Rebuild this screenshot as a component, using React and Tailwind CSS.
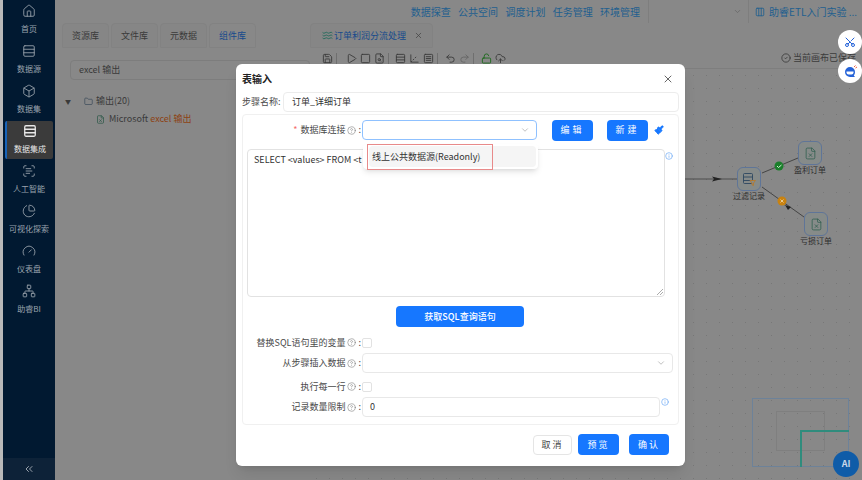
import { Home, Rows3, Box, ScanText, ChartPie, Gauge, Network, ChevronDown, X, CircleHelp, Info, ChevronsLeft, Folder, Save, Play, Square, Undo2, Redo2, LockOpen, CloudUpload, CircleCheck, Scissors, Paintbrush, FileX, Waves, FileSearch, Axis3d, Columns3, SquareMenu } from "lucide-react";

const font = { fontFamily: '"Noto Sans CJK SC", "Noto Sans", sans-serif' };

const navItems = [
  { icon: Home, label: "首页" },
  { icon: Rows3, label: "数据源" },
  { icon: Box, label: "数据集" },
  { icon: Rows3, label: "数据集成", active: true },
  { icon: ScanText, label: "人工智能" },
  { icon: ChartPie, label: "可视化探索" },
  { icon: Gauge, label: "仪表盘" },
  { icon: Network, label: "助睿BI" },
];

function Sidebar() {
  return (
    <aside className="w-[52px] shrink-0 bg-[#011931] flex flex-col text-[#9aa3ad]">
      <div className="flex-1 flex flex-col">
        {navItems.map((item) => {
          const Icon = item.icon;
          return (
            <div
              key={item.label}
              className={
                item.active
                  ? "h-[38px] mt-px mb-px ml-0.5 w-12 pt-[3px] bg-[#3b3b3b] rounded-[2px] border-l-2 border-[#1763b8] flex flex-col items-center text-[#e8e8e8]"
                  : "h-10 pt-[4px] flex flex-col items-center"
              }
            >
              <Icon className="w-[14px] h-[14px]" strokeWidth={item.active ? 2.2 : 1.5} />
              <span className="text-[8px] leading-[11px] mt-[5px] whitespace-nowrap">{item.label}</span>
            </div>
          );
        })}
      </div>
      <div className="h-[22px] bg-[#0d2238] flex items-center justify-center">
        <ChevronsLeft className="w-3 h-3" />
      </div>
    </aside>
  );
}

function LeftPanel() {
  return (
    <div className="w-[255px] shrink-0 pl-[7px] text-[#3a3a3a]">
      <div className="flex gap-[2px] text-[9px]">
        <span className="w-[47px] h-[25px] flex items-center justify-center bg-[#868686] border border-[#828282] rounded-t">资源库</span>
        <span className="w-[47px] h-[25px] flex items-center justify-center bg-[#868686] border border-[#828282] rounded-t">文件库</span>
        <span className="w-[47px] h-[25px] flex items-center justify-center bg-[#868686] border border-[#828282] rounded-t">元数据</span>
        <span className="w-[47px] h-[25px] flex items-center justify-center border border-[#828282] rounded-t text-[#164a8c]">组件库</span>
      </div>
      <div className="mt-[12px] ml-[8px] h-[20px] w-[240px] border border-[#7d7d7d] rounded flex items-center px-2 text-[9px]">excel 输出</div>
      <div className="mt-[15px] flex items-center text-[9px] h-[12px]">
        <span className="text-[6px] w-[22px] pl-[3px]">▼</span>
        <Folder className="w-[9px] h-[9px] text-[#3f4d5c] mr-[3px]" />
        <span>输出(20)</span>
      </div>
      <div className="mt-[6px] ml-[34px] flex items-center text-[9px] h-[12px] whitespace-nowrap">
        <FileX className="w-[9px] h-[9px] text-[#2f5a4a] mr-[4px]" />
        <span>Microsoft <span className="text-[#8d4213]">excel 输出</span></span>
      </div>
    </div>
  );
}

function Node({ className, label, children }) {
  return (
    <div className={`absolute w-[60px] flex flex-col items-center ${className}`}>
      <div className="w-6 h-6 rounded-md border-[1.5px] border-[#5f7598] flex items-center justify-center bg-[#868b89]">{children}</div>
      <span className="text-[8px] leading-[10px] text-[#2e2e2e] whitespace-nowrap">{label}</span>
    </div>
  );
}

function Canvas() {
  return (
    <div className="flex-1 border-t border-[#7e7e7e] bg-[radial-gradient(#777777_0.5px,transparent_0.6px)] bg-[length:13px_13px]" />
  );
}

function ToolDivider() {
  return <span className="w-px h-[11px] bg-[#6f6f6f]" />;
}

function Main() {
  return (
    <div className="flex-1 min-w-0 flex flex-col">
      <header className="h-[23px] shrink-0 flex items-center justify-end text-[10px] text-[#1f5f8f]">
        <div className="flex gap-[7.300px] pr-[8px] h-full items-center whitespace-nowrap">
          <span>数据探查</span>
          <span>公共空间</span>
          <span>调度计划</span>
          <span>任务管理</span>
          <span>环境管理</span>
        </div>
        <div className="w-[214px] border-l border-[#7e7e7e] h-full flex items-center justify-end pr-[5px]">
          <ChevronDown className="w-[9px] h-[9px] text-[#666] mr-[6px]" />
          <span className="whitespace-nowrap flex items-center gap-[4px] border-l border-[#7e7e7e] pl-[6px] h-full">
            <Columns3 className="w-[10px] h-[10px]" />助睿ETL入门实验 ...
          </span>
        </div>
      </header>
      <div className="flex-1 flex min-h-0">
        <LeftPanel />
        <div className="flex-1 min-w-0 flex flex-col">
          <div className="h-[25px] shrink-0 flex">
            <div className="w-[123px] flex items-center bg-[#868686] border border-[#828282] rounded-t pl-[11px] text-[9px] text-[#164a8c]">
              <Waves className="w-[11px] h-[11px] text-[#1f6a5a] mr-px shrink-0" />
              <span className="whitespace-nowrap">订单利润分流处理</span>
              <X className="w-[9px] h-[9px] text-[#444] ml-[8px]" />
            </div>
          </div>
          <div className="h-[20px] shrink-0 flex items-center pl-[12px] gap-[3px] text-[#3b3b3b]">
            <Save className="w-[11px] h-[11px]" />
            <ToolDivider />
            <Play className="w-[11px] h-[11px] ml-[6px]" />
            <Square className="w-[11px] h-[11px]" />
            <FileSearch className="w-[11px] h-[11px]" />
            <ToolDivider />
            <Rows3 className="w-[11px] h-[11px] ml-[3px]" />
            <Axis3d className="w-[11px] h-[11px]" />
            <SquareMenu className="w-[11px] h-[11px]" />
            <ToolDivider />
            <Undo2 className="w-[11px] h-[11px] ml-[4px]" />
            <Redo2 className="w-[11px] h-[11px] text-[#666]" />
            <ToolDivider />
            <LockOpen className="w-[11px] h-[11px] text-[#1e6a1e] ml-[4px]" />
            <CloudUpload className="w-[11px] h-[11px]" />
            <span className="ml-auto text-[9px] flex items-center gap-[2px] whitespace-nowrap pr-[6px]">
              <CircleCheck className="w-[10px] h-[10px] shrink-0" />当前画布已保存
            </span>
          </div>
          <Canvas />
        </div>
      </div>
    </div>
  );
}

function Label({ children, help = true, required }) {
  return (
    <div className="w-[118px] shrink-0 flex items-center justify-end text-[9px] text-[#4a4a4a] whitespace-nowrap gap-[2px]">
      {required && <span className="text-[#f56c6c] mr-px">*</span>}
      <span>{children}</span>
      {help && <CircleHelp className="w-[9px] h-[9px] text-[#777]" strokeWidth={1.5} />}
      <span>:</span>
    </div>
  );
}

function BlueButton({ className, children }) {
  return (
    <button className={`h-[21px] rounded bg-[#1677ff] text-white text-[9px] flex items-center justify-center ${className}`}>
      {children}
    </button>
  );
}

function Dialog() {
  return (
    <div className="absolute left-[236px] top-[64px] w-[449px] h-[402px] bg-white rounded-md px-[6px] shadow-lg flex flex-col">
      <div className="h-[28px] flex items-center justify-between pt-[1px]">
        <span className="text-[10px] font-bold text-[#222]">表输入</span>
        <X className="w-[12px] h-[12px] text-[#666] mr-[5px]" />
      </div>
      <div className="flex items-center h-[20px]">
        <span className="w-[41px] text-[9px] text-[#4a4a4a] whitespace-nowrap">步骤名称:</span>
        <div className="flex-1 h-[20px] border border-[#ececec] rounded flex items-center px-2 text-[9px] text-[#333]">订单_详细订单</div>
      </div>
      <div className="relative mt-[2px] w-[437px] h-[311px] border border-[#f0f0f0] rounded pt-[5px]">
        <div className="flex items-center h-[20px]">
          <Label required>数据库连接</Label>
          <div className="ml-[1px] w-[175px] h-[20px] border border-[#8fc1ff] rounded flex items-center justify-end pr-[6px]">
            <ChevronDown className="w-[10px] h-[10px] text-[#b5b5b5]" />
          </div>
          <BlueButton className="ml-[15px] w-[41px] tracking-[3px]">编辑</BlueButton>
          <BlueButton className="ml-[14px] w-[41px] tracking-[3px]">新建</BlueButton>
          <Paintbrush className="ml-[6px] w-[10px] h-[10px] text-[#1677ff]" fill="currentColor" />
        </div>
        <div className="relative ml-[4px] mt-[9px] w-[418px] h-[148px] border border-[#e2e2e2] rounded px-[6px] pt-[3px] text-[9px] text-[#333] whitespace-nowrap">
          SELECT &lt;values&gt; FROM &lt;t
          <Info className="absolute -right-[9px] top-0.5 w-[8px] h-[8px] text-[#69a8f5]" />
          <svg className="absolute right-px bottom-px w-[6px] h-[6px]" fill="none" stroke="#888" strokeWidth="0.7">
            <path d="M0 6L6 0M3 6L6 3" />
          </svg>
        </div>
        <div className="flex justify-center mt-[9px] -ml-px">
          <BlueButton className="w-[128px] font-medium">获取SQL查询语句</BlueButton>
        </div>
        <div className="flex items-center h-[11px] mt-[10px]">
          <Label>替换SQL语句里的变量</Label>
          <span className="ml-[1px] w-[10px] h-[10px] border border-[#e2e2e2] rounded-[2px]" />
        </div>
        <div className="flex items-center h-[20px] mt-[5px]">
          <Label>从步骤插入数据</Label>
          <div className="ml-[1px] w-[311px] h-[20px] border border-[#e8e8e8] rounded flex items-center justify-end pr-[6px]">
            <ChevronDown className="w-[10px] h-[10px] text-[#b5b5b5]" />
          </div>
        </div>
        <div className="flex items-center h-[11px] mt-[8px]">
          <Label>执行每一行</Label>
          <span className="ml-[1px] w-[10px] h-[10px] border border-[#e2e2e2] rounded-[2px]" />
        </div>
        <div className="flex items-center h-[20px] mt-[5px]">
          <Label>记录数量限制</Label>
          <div className="ml-[1px] w-[298px] h-[20px] border border-[#e8e8e8] rounded flex items-center px-[7px] text-[9px] text-[#333]">0</div>
          <Info className="ml-px -mt-[10px] w-[8px] h-[8px] text-[#69a8f5]" />
        </div>
        <div className="absolute left-[120px] top-[29px] w-[175px] h-[25px] bg-white rounded shadow-md p-[2px] pl-[6px]">
          <div className="h-[21px] bg-[#f5f5f5] rounded" />
        </div>
        <div className="absolute left-[124px] top-[29px] w-[126px] h-[26px] border border-[#e88a8a] flex items-center pl-[4px] text-[9px] text-[#333] whitespace-nowrap">
          线上公共数据源(Readonly)
        </div>
      </div>
      <div className="flex justify-end items-center mt-[9px] pr-[10px]">
        <button className="w-[39px] h-[20px] border border-[#e5e5e5] rounded text-[9px] text-[#444] tracking-[2px]">取消</button>
        <BlueButton className="ml-[6px] w-[41px] tracking-[2px]">预览</BlueButton>
        <BlueButton className="ml-[10px] w-[40px] tracking-[2px]">确认</BlueButton>
      </div>
    </div>
  );
}

function Flow() {
  return (
    <>
      <svg className="absolute left-[685px] top-[120px] w-[177px] h-[130px]" fill="none">
        <path d="M0 59H52" stroke="#333" strokeWidth="0.7" />
        <path d="M27 56.500l10 2.500-10 2.500 2-2.500z" fill="#222" />
        <path d="M77 53L113 38" stroke="#333" strokeWidth="0.8" />
        <path d="M77 67L119 97" stroke="#333" strokeWidth="0.8" />
        <path d="M100 85l6 2-3 3z" fill="#222" />
        <circle cx="94" cy="46" r="4.500" fill="#1a7f2b" />
        <path d="M92 46l1.500 1.500L96.500 45" stroke="#d9efd9" strokeWidth="1" />
        <circle cx="97" cy="81" r="4.500" fill="#c9820f" />
        <path d="M95.500 79.500l3 3m0-3l-3 3" stroke="#f0dcb0" strokeWidth="0.8" />
      </svg>
      <Node className="left-[719px] top-[167px]" label="过滤记录">
        <svg className="w-[15px] h-[15px]" viewBox="0 0 15 15" fill="none">
          <rect x="1.500" y="1.500" width="9" height="10" rx="1" stroke="#2c4760" strokeWidth="0.9" />
          <path d="M1.500 5h9M1.500 8.500h9" stroke="#2c4760" strokeWidth="0.9" />
          <path d="M8 8.500h5.500L11.500 11v2.500l-1.500-.7V11z" fill="#868b89" stroke="#b5792a" strokeWidth="0.9" />
        </svg>
      </Node>
      <Node className="left-[780px] top-[141px]" label="盈利订单"><FileX className="w-[13px] h-[13px] text-[#2d5c4d]" strokeWidth={1.4} /></Node>
      <Node className="left-[786px] top-[212px]" label="亏损订单"><FileX className="w-[13px] h-[13px] text-[#2d5c4d]" strokeWidth={1.4} /></Node>
    </>
  );
}

export default function App() {
  return (
    <div className="relative w-[862px] h-[480px] overflow-hidden flex bg-[#888888]" style={font}>
      <div className="w-[3px] shrink-0 bg-[#b9b9b9]" />
      <Sidebar />
      <Main />
      <Flow />
      {/* minimap */}
      <div className="absolute left-[752px] top-[398px] w-[97px] h-[69px] border border-[#6d8299]">
        <div className="absolute left-[23px] top-[12px] w-[49px] h-[40px] border border-[#7f7f7f]" />
        <div className="absolute left-[47px] top-[31px] w-[49px] h-[37px] border-l-2 border-t-2 border-[#2f8c7d]" />
      </div>
      <div className="absolute left-[833px] top-[451px] w-[26px] h-[26px] rounded-full bg-[#0f5ca8] text-[#c9d9ea] text-[9px] font-bold flex items-center justify-center">AI</div>
      <div className="absolute left-[838px] top-[30px] w-6 h-6 rounded-full bg-white flex items-center justify-center">
        <Scissors className="w-3 h-3 text-[#2563d8] -rotate-90" />
      </div>
      <div className="absolute left-[838px] top-[59px] w-6 h-6 rounded-full bg-white flex items-center justify-center">
        <svg className="w-[15px] h-[15px]" viewBox="0 0 15 15">
          <path d="M7 3a5 5 0 0 1 5 5c0 1.500-.5 2.700-1.200 3.500l1.200 1.500H7a5 5 0 0 1 0-10z" fill="#2563d8" />
          <path d="M3.500 7.500h7v1a2 2 0 0 1-2 2h-3a2 2 0 0 1-2-2z" fill="#fff" />
          <path d="M11 3l1.500-1.500M12.500 4L14 3" stroke="#ef5a3c" strokeWidth="1" />
        </svg>
      </div>
      <Dialog />
    </div>
  );
}
